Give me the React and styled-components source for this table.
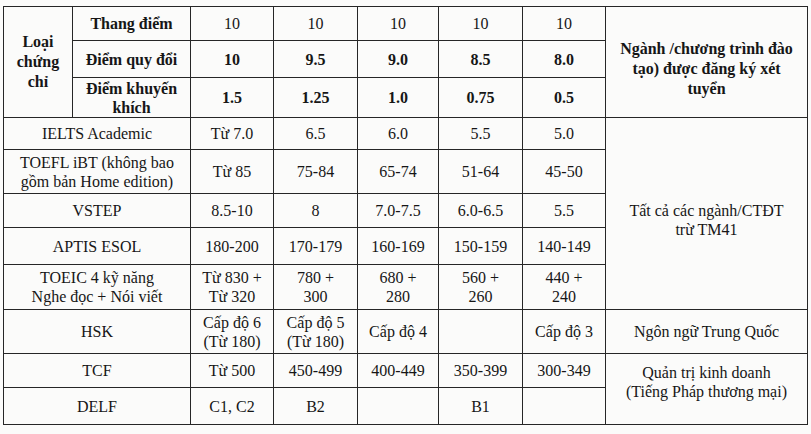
import React from 'react';
import styled, { createGlobalStyle } from 'styled-components';

const GlobalStyle = createGlobalStyle`
  html, body {
    margin: 0;
    padding: 0;
    background: #fbfbfa;
  }
`;

const Page = styled.div`
  padding: 6px 0 0 3px;
  font-family: 'Liberation Serif', 'Times New Roman', serif;
  color: #161616;
`;

const Table = styled.table`
  border-collapse: collapse;
  table-layout: fixed;
  width: 804px;
  font-size: 16px;
  line-height: 19px;
`;

const Row = styled.tr`
  height: ${(p) => p.$h}px;
`;

const Cell = styled.td`
  border: 1.5px solid #262626;
  padding: ${(p) => p.$pad || '0 2px'};
  text-align: center;
  vertical-align: middle;
  font-weight: ${(p) => (p.$bold ? 700 : 400)};
  white-space: nowrap;
`;

const WrapCell = styled(Cell)`
  white-space: normal;
  line-height: 20px;
`;

const cols = [69, 118, 83, 84, 81, 84, 83, 202];

const header = [
  { label: 'Thang điểm', values: ['10', '10', '10', '10', '10'], bold: false, h: 34 },
  { label: 'Điểm quy đổi', values: ['10', '9.5', '9.0', '8.5', '8.0'], bold: true, h: 37 },
  { label: <>Điểm khuyến<br />khích</>, values: ['1.5', '1.25', '1.0', '0.75', '0.5'], bold: true, h: 40 },
];

const body = [
  { name: 'IELTS Academic', values: ['Từ 7.0', '6.5', '6.0', '5.5', '5.0'], h: 32,
    target: { text: <>Tất cả các ngành/CTĐT<br />trừ TM41</>, span: 5, pad: '12px 2px 0' } },
  { name: <>TOEFL iBT (không bao<br />gồm bản Home edition)</>, values: ['Từ 85', '75-84', '65-74', '51-64', '45-50'], h: 44 },
  { name: 'VSTEP', values: ['8.5-10', '8', '7.0-7.5', '6.0-6.5', '5.5'], h: 34 },
  { name: 'APTIS ESOL', values: ['180-200', '170-179', '160-169', '150-159', '140-149'], h: 37 },
  { name: <>TOEIC 4 kỹ năng<br />Nghe đọc + Nói viết</>,
    values: [<>Từ 830 +<br />Từ 320</>, <>780 +<br />300</>, <>680 +<br />280</>, <>560 +<br />260</>, <>440 +<br />240</>], h: 45 },
  { name: 'HSK', values: [<>Cấp độ 6<br />(Từ 180)</>, <>Cấp độ 5<br />(Từ 180)</>, 'Cấp độ 4', '', 'Cấp độ 3'], h: 44,
    target: { text: 'Ngôn ngữ Trung Quốc', span: 1 } },
  { name: 'TCF', values: ['Từ 500', '450-499', '400-449', '350-399', '300-349'], h: 34,
    target: { text: <>Quản trị kinh doanh<br />(Tiếng Pháp thương mại)</>, span: 2, pad: '0 2px 14px' } },
  { name: 'DELF', values: ['C1, C2', 'B2', '', 'B1', ''], h: 37 },
];

export default function App() {
  return (
    <Page>
      <GlobalStyle />
      <Table>
        <colgroup>
          {cols.map((w, i) => (
            <col key={i} style={{ width: w }} />
          ))}
        </colgroup>
        <tbody>
          {header.map((r, i) => (
            <Row key={i} $h={r.h}>
              {i === 0 && (
                <WrapCell rowSpan={3} $bold>
                  Loại<br />chứng<br />chỉ
                </WrapCell>
              )}
              <Cell $bold>{r.label}</Cell>
              {r.values.map((v, j) => (
                <Cell key={j} $bold={r.bold}>{v}</Cell>
              ))}
              {i === 0 && (
                <WrapCell rowSpan={3} $bold $pad="14px 2px 0">
                  Ngành /chương trình đào<br />tạo) được đăng ký xét<br />tuyển
                </WrapCell>
              )}
            </Row>
          ))}
          {body.map((r, i) => (
            <Row key={i} $h={r.h}>
              <Cell colSpan={2}>{r.name}</Cell>
              {r.values.map((v, j) => (
                <Cell key={j}>{v}</Cell>
              ))}
              {r.target && (
                <Cell rowSpan={r.target.span} $pad={r.target.pad}>
                  {r.target.text}
                </Cell>
              )}
            </Row>
          ))}
        </tbody>
      </Table>
    </Page>
  );
}
